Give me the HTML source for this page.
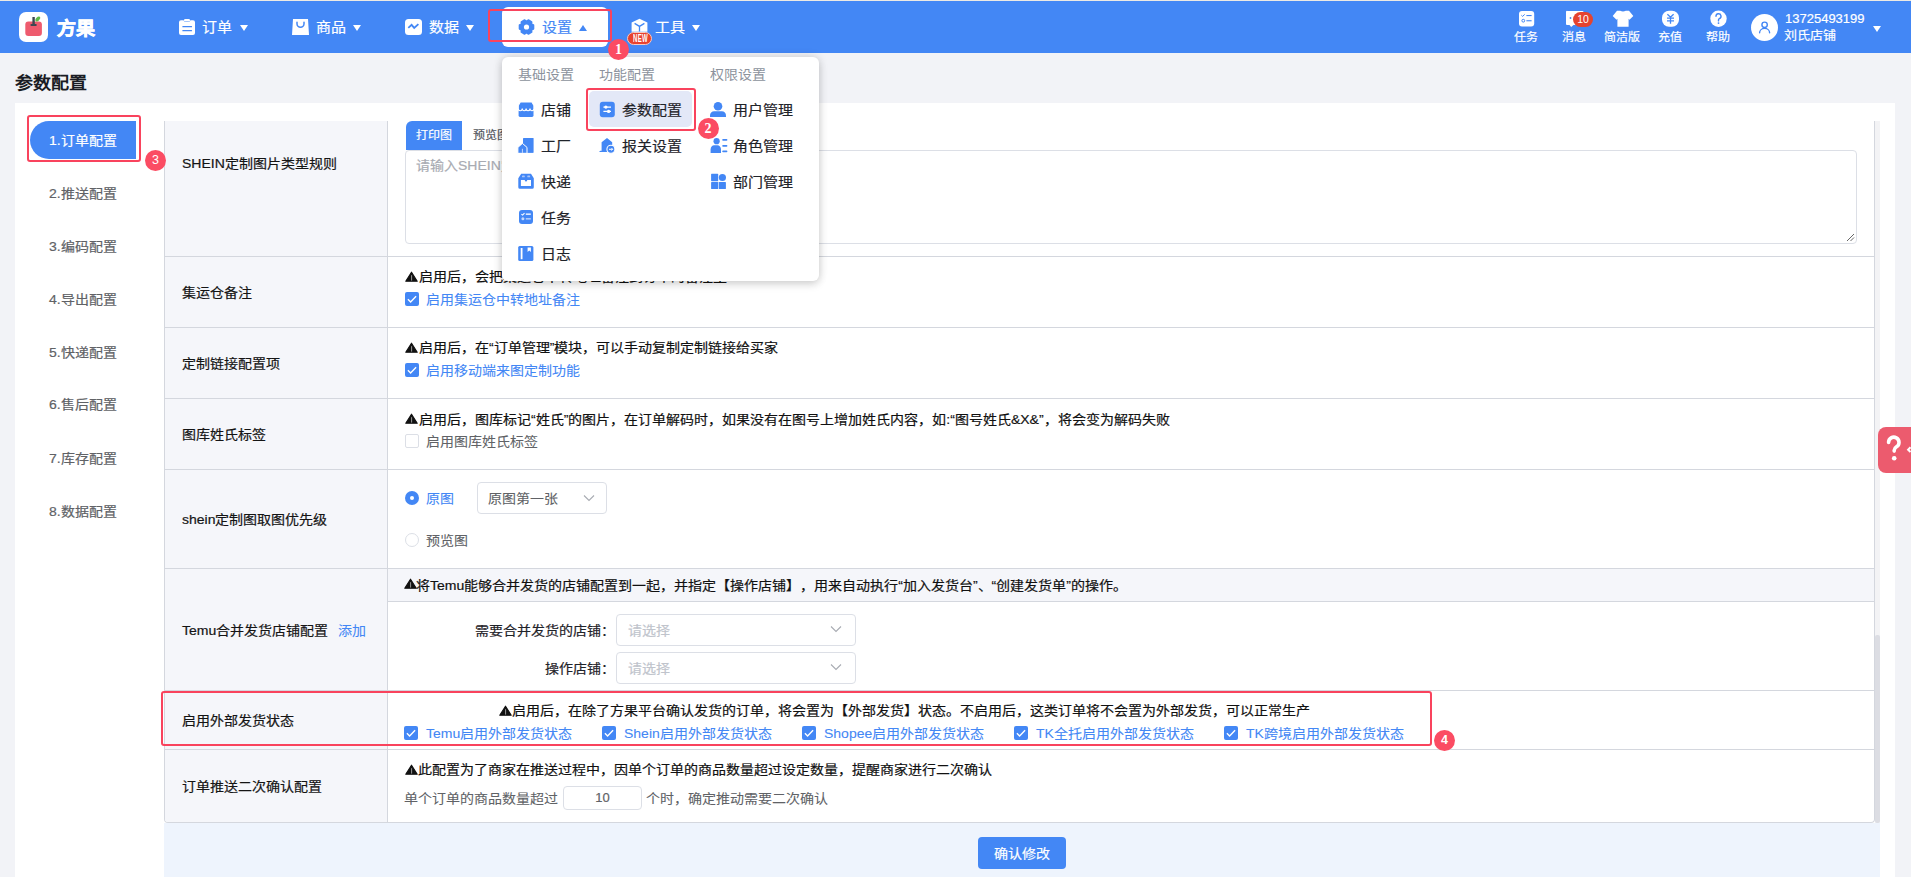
<!DOCTYPE html>
<html lang="zh-CN"><head><meta charset="utf-8">
<style>
*{box-sizing:border-box;margin:0;padding:0}
html,body{width:1911px;height:877px;overflow:hidden}
body{position:relative;text-spacing-trim:space-all;background:#f2f3f7;font-family:"Liberation Sans",sans-serif;font-size:14px;line-height:20px;color:#1f2329}
.a{position:absolute;white-space:nowrap}
.t{position:absolute;white-space:nowrap;line-height:20px;-webkit-text-stroke:0.2px currentColor;transform:scaleY(.93);transform-origin:50% 50%}
#topline{left:0;top:0;width:1911px;height:1px;background:#eceae4}
#nav{left:0;top:1px;width:1911px;height:52px;background:#4387f5}
.nt{color:#fff;font-size:15px}
.caret{position:absolute;width:0;height:0;border-left:4.5px solid transparent;border-right:4.5px solid transparent;border-top:6px solid #fff}
.caretup{position:absolute;width:0;height:0;border-left:4.5px solid transparent;border-right:4.5px solid transparent;border-bottom:6px solid #4387f5}
.rt{color:#fff;font-size:12px}
.redbox{position:absolute;border:2px solid #f9435d;border-radius:3px}
.badge{position:absolute;width:21px;height:21px;border-radius:50%;background:#fb4c63;color:#fff;font-family:"Liberation Serif",serif;font-size:14px;line-height:21px;text-align:center;font-weight:bold}
.badge.sm{font-family:"Liberation Sans",sans-serif;font-size:12.5px;font-weight:normal}
.side{color:#606266;font-size:14px}
.hl{background:#d4d7de}
.lab{font-size:14px;color:#141414}
.warn{font-size:14px;color:#111}
.tri{position:absolute;width:0;height:0;border-left:6px solid transparent;border-right:6px solid transparent;border-bottom:10px solid #111}
.cb{position:absolute;width:14px;height:14px;border-radius:2px;background:#4387f5}
.cb svg{position:absolute;left:0;top:0}
.cbe{position:absolute;width:14px;height:14px;border-radius:2px;background:#fff;border:1px solid #dcdfe6}
.t.blue{color:#4387f5;-webkit-text-stroke:0.08px currentColor}
.t.gray{color:#606266;-webkit-text-stroke:0.08px currentColor}
.blue{color:#4387f5}
.gray{color:#606266}
svg{display:block}
.sel{position:absolute;border:1px solid #dcdfe6;border-radius:4px;background:#fff}
.dd{font-size:15px;color:#1f2329}
.ddh{font-size:14px;color:#8c929c;-webkit-text-stroke:0 !important}
</style></head><body>
<div class="a" id="topline"></div>
<div class="a" id="nav"></div>

<!-- logo -->
<div class="a" style="left:19px;top:12px;width:29px;height:30px;background:#fff;border-radius:7px"></div>
<svg class="a" style="left:19px;top:12px" width="29" height="30" viewBox="0 0 29 30">
<rect x="6.3" y="9.6" width="16.6" height="14.4" rx="3" fill="#ee5b6e"/>
<rect x="13.4" y="5" width="2.4" height="8" fill="#3d4852"/>
<rect x="11.4" y="12" width="6.4" height="2" rx="1" fill="#3d4852"/>
<ellipse cx="18.8" cy="7" rx="3" ry="1.7" transform="rotate(-48 18.8 7)" fill="#5cb94a"/>
</svg>
<div class="t" style="left:56.5px;top:17px;font-size:19px;line-height:24px;font-weight:bold;color:#fff;-webkit-text-stroke:0.7px #fff">方果</div>

<!-- 订单 -->
<svg class="a" style="left:178px;top:18px" width="18" height="18" viewBox="0 0 18 18">
<path d="M3 2.2h2.6a2.2 2 0 0 0 2.2 1.8h2.4a2.2 2 0 0 0 2.2-1.8H15a2 2 0 0 1 2 2V15a2 2 0 0 1-2 2H3a2 2 0 0 1-2-2V4.2a2 2 0 0 1 2-2z" fill="#fff"/>
<rect x="6" y="1" width="6" height="2.6" rx="1.3" fill="#fff"/>
<rect x="4.3" y="8" width="9.8" height="1.3" rx=".6" fill="#4387f5"/>
<rect x="4.3" y="12" width="9.8" height="1.3" rx=".6" fill="#4387f5"/>
</svg>
<div class="t nt" style="left:202px;top:17px">订单</div>
<div class="caret" style="left:240px;top:25px"></div>

<!-- 商品 -->
<svg class="a" style="left:291px;top:18px" width="19" height="18" viewBox="0 0 19 18">
<path d="M2 1h15l1 16H1z" fill="#fff"/>
<path d="M6 4.2v1.6a3.5 3.5 0 0 0 7 0V4.2" fill="none" stroke="#4387f5" stroke-width="1.5" stroke-linecap="round"/>
</svg>
<div class="t nt" style="left:316px;top:17px">商品</div>
<div class="caret" style="left:353px;top:25px"></div>

<!-- 数据 -->
<svg class="a" style="left:404px;top:18px" width="19" height="18" viewBox="0 0 19 18">
<rect x="1" y="1" width="17" height="16" rx="3.5" fill="#fff"/>
<path d="M4.3 9.8L7.6 6.8L10.2 9.9L14.4 6.1" fill="none" stroke="#4387f5" stroke-width="1.8" stroke-linejoin="miter"/>
</svg>
<div class="t nt" style="left:429px;top:17px">数据</div>
<div class="caret" style="left:466px;top:25px"></div>

<!-- 设置 active -->
<div class="a" style="left:502px;top:7px;width:106px;height:40px;background:#fff;border-radius:6px"></div>
<svg class="a" style="left:517px;top:18px" width="19" height="18" viewBox="0 0 19 18">
<polygon points="14.71,6.46 16.36,7.16 16.36,10.84 14.71,11.54 14.31,12.24 14.52,14.02 11.34,15.86 9.90,14.79 9.10,14.79 7.66,15.86 4.48,14.02 4.69,12.24 4.29,11.54 2.64,10.84 2.64,7.16 4.29,6.46 4.69,5.76 4.48,3.98 7.66,2.14 9.10,3.21 9.90,3.21 11.34,2.14 14.52,3.98 14.31,5.76" fill="#4387f5" stroke="#4387f5" stroke-width="1.9" stroke-linejoin="round"/>
<circle cx="9.5" cy="9" r="2.6" fill="#fff"/>
</svg>
<div class="t nt" style="left:542px;top:17px;color:#4387f5">设置</div>
<div class="caretup" style="left:578.5px;top:24.5px"></div>

<!-- 工具 -->
<svg class="a" style="left:631px;top:18px" width="17" height="15" viewBox="0 0 17 15">
<path d="M8.5 .8L16.4 4.6V13.8H.6V4.6z" fill="#fff"/>
<path d="M3.6 5.4L8.5 8.4L13.4 5.4M8.5 8.4V13.6" fill="none" stroke="#4387f5" stroke-width="1.3"/>
</svg>
<div class="a" style="left:627px;top:32px;width:25px;height:13px;border-radius:6.5px;background:#e8422f;border:1px solid #f5c9c0"></div>
<div class="a" style="left:633px;top:33.5px;font-size:10px;line-height:10px;font-weight:bold;color:#fff;transform:scaleX(.6);transform-origin:0 0;letter-spacing:.5px">NEW</div>
<div class="t nt" style="left:655px;top:17px">工具</div>
<div class="caret" style="left:692px;top:25px"></div>

<!-- right side -->
<svg class="a" style="left:1518px;top:10px" width="17" height="17" viewBox="0 0 17 17">
<rect x="1" y="1" width="15.2" height="15.5" rx="3" fill="#fff"/>
<path d="M3.4 5.3l1.2 1.1 2.1-2" fill="none" stroke="#4387f5" stroke-width="1"/>
<rect x="8.4" y="5" width="5.2" height="1.1" fill="#4387f5"/>
<circle cx="5.3" cy="10.7" r="1.4" fill="none" stroke="#4387f5" stroke-width="1"/>
<rect x="8.4" y="10.2" width="5.2" height="1.1" fill="#4387f5"/>
</svg>
<div class="t rt" style="left:1514px;top:27px">任务</div>

<svg class="a" style="left:1565px;top:10px" width="20" height="18" viewBox="0 0 20 18">
<path d="M2.5 1h15a1 1 0 0 1 1 1v12a1 1 0 0 1-1 1H8.5L6.2 17 4.5 15H2a1 1 0 0 1-1-1V2a1 1 0 0 1 1.5-1z" fill="#fff"/>
<circle cx="5.5" cy="8" r=".9" fill="#4387f5"/>
</svg>
<div class="a" style="left:1573px;top:12px;width:20px;height:14.5px;border-radius:7.5px;background:#e5432f;color:#fff;font-size:10.5px;line-height:14.5px;text-align:center">10</div>
<div class="t rt" style="left:1562px;top:27px">消息</div>

<svg class="a" style="left:1612px;top:10px" width="22" height="18" viewBox="0 0 22 18">
<path d="M5 .8h3.2q2.8 1.3 5.6 0H17l4.3 5.3-3.8 3.6-.9-.9V16.7H5.4V8.8l-.9.9L.7 6.1z" fill="#fff"/>
</svg>
<div class="t rt" style="left:1604px;top:27px">简洁版</div>

<svg class="a" style="left:1661px;top:10px" width="19" height="18" viewBox="0 0 19 18">
<rect x="1" y=".8" width="17" height="16" rx="7" fill="#fff"/>
<path d="M6.4 4.2l3.1 3 3.1-3M6 8.1h7M6 10.9h7M9.5 7.2v6.6" fill="none" stroke="#4387f5" stroke-width="1.3"/>
</svg>
<div class="t rt" style="left:1658px;top:27px">充值</div>

<svg class="a" style="left:1709px;top:10px" width="19" height="18" viewBox="0 0 19 18">
<circle cx="9.5" cy="8.8" r="8.2" fill="#fff"/>
<path d="M7 6.3a2.5 2.5 0 1 1 3.4 2.3c-.6.3-.9.7-.9 1.3v1" fill="none" stroke="#4387f5" stroke-width="1.4" stroke-linecap="round"/>
<circle cx="9.5" cy="13.1" r=".9" fill="#4387f5"/>
</svg>
<div class="t rt" style="left:1706px;top:27px">帮助</div>

<div class="a" style="left:1751px;top:14px;width:27px;height:27px;border-radius:50%;background:#fff"></div>
<svg class="a" style="left:1751px;top:14px" width="27" height="27" viewBox="0 0 27 27">
<circle cx="13.6" cy="10.8" r="2.7" fill="none" stroke="#4387f5" stroke-width="1.4"/>
<path d="M8.6 18.7a5 4.3 0 0 1 10 0" fill="none" stroke="#4387f5" stroke-width="1.4" stroke-linecap="round"/>
</svg>
<div class="t" style="left:1785px;top:9px;font-size:13px;color:#fff">13725493199</div>
<div class="t" style="left:1784px;top:26px;font-size:13px;color:#fff">刘氏店铺</div>
<div class="caret" style="left:1873px;top:26px"></div>


<!-- page title -->
<div class="t" style="left:15px;top:72.5px;font-size:18px;font-weight:bold;color:#1a1c24;-webkit-text-stroke:0">参数配置</div>
<!-- card -->
<div class="a" style="left:15px;top:103px;width:1880px;height:774px;background:#fff"></div>
<!-- sidebar -->
<div class="a" style="left:30px;top:121px;width:106px;height:38px;background:#4387f5;border-radius:19px 0 0 19px"></div>
<div class="t" style="left:49px;top:130px;color:#fff">1.订单配置</div>
<div class="t side" style="left:49px;top:182.7px">2.推送配置</div>
<div class="t side" style="left:49px;top:236px">3.编码配置</div>
<div class="t side" style="left:49px;top:288.7px">4.导出配置</div>
<div class="t side" style="left:49px;top:341.5px">5.快递配置</div>
<div class="t side" style="left:49px;top:394.2px">6.售后配置</div>
<div class="t side" style="left:49px;top:447.5px">7.库存配置</div>
<div class="t side" style="left:49px;top:500.5px">8.数据配置</div>

<!-- table -->
<div class="a" style="left:164px;top:121px;width:1711px;height:702px;border:1px solid #d4d7de;border-top:none;border-radius:0 0 4px 4px;background:#fff"></div>
<div class="a" style="left:165px;top:121px;width:222px;height:701px;background:#f5f6fa;border-radius:0 0 0 3px"></div>
<div class="a hl" style="left:387px;top:121px;width:1px;height:701px"></div>
<div class="a" style="left:388px;top:569px;width:1486px;height:32px;background:#f5f6fa"></div>
<div class="a hl" style="left:165px;top:256px;width:1709px;height:1px"></div>
<div class="a hl" style="left:165px;top:327px;width:1709px;height:1px"></div>
<div class="a hl" style="left:165px;top:398px;width:1709px;height:1px"></div>
<div class="a hl" style="left:165px;top:469px;width:1709px;height:1px"></div>
<div class="a hl" style="left:165px;top:568px;width:1709px;height:1px"></div>
<div class="a hl" style="left:388px;top:601px;width:1486px;height:1px"></div>
<div class="a hl" style="left:165px;top:690px;width:1709px;height:1px"></div>
<div class="a hl" style="left:165px;top:749px;width:1709px;height:1px"></div>
<!-- scrollbar -->
<div class="a" style="left:1875px;top:121px;width:5px;height:702px;background:#f3f3f5"></div>
<div class="a" style="left:1875px;top:635px;width:5px;height:188px;background:#dcdde3;border-radius:2px"></div>
<!-- footer -->
<div class="a" style="left:164px;top:823px;width:1716px;height:54px;background:#eef4fd"></div>
<div class="a" style="left:978px;top:837px;width:88px;height:32px;background:#4387f5;border-radius:4px"></div>
<div class="t" style="left:994px;top:843px;color:#fff">确认修改</div>

<!-- labels -->
<div class="t lab" style="left:182px;top:153px">SHEIN定制图片类型规则</div>
<div class="t lab" style="left:182px;top:282px">集运仓备注</div>
<div class="t lab" style="left:182px;top:353px">定制链接配置项</div>
<div class="t lab" style="left:182px;top:424px">图库姓氏标签</div>
<div class="t lab" style="left:182px;top:509px">shein定制图取图优先级</div>
<div class="t lab" style="left:182px;top:620px">Temu合并发货店铺配置</div>
<div class="t blue" style="left:338px;top:620px">添加</div>
<div class="t lab" style="left:182px;top:710px">启用外部发货状态</div>
<div class="t lab" style="left:182px;top:776px">订单推送二次确认配置</div>


<!-- row1 -->
<div class="a" style="left:406px;top:121px;width:56px;height:29px;background:#4387f5;border-radius:6px 0 0 0"></div>
<div class="t" style="left:416px;top:125px;font-size:12px;color:#fff">打印图</div>
<div class="t" style="left:473px;top:125px;font-size:12px;color:#51555c">预览图</div>
<div class="a" style="left:405px;top:150px;width:1452px;height:94px;border:1px solid #dcdfe6;border-radius:4px;background:#fff"></div>
<svg class="a" style="left:1845px;top:232px" width="10" height="10" viewBox="0 0 10 10"><path d="M2 9L9 2M5.5 9L9 5.5" stroke="#555" stroke-width=".9"/></svg>
<div class="t" style="left:416px;top:155px;font-size:14px;color:#a8abb2">请输入SHEIN定制图片类型规则</div>

<!-- row2 -->
<svg class="a" style="left:405px;top:271px" width="13" height="11" viewBox="0 0 13 11"><path d="M6.5 1.2L12.2 10.2H.8z" fill="#111" stroke="#111" stroke-width="1.2" stroke-linejoin="round"/><rect x="6" y="4.2" width="1.1" height="5.4" fill="#8a8a8a"/></svg>
<div class="t warn" style="left:419px;top:266px">启用后，会把集运仓中转地址备注到订单的备注里</div>
<div class="cb" style="left:405px;top:292px"><svg width="14" height="14" viewBox="0 0 14 14"><path d="M2.9 7.3L5.6 10L11.1 4.3" fill="none" stroke="#fff" stroke-width="1.4"/></svg></div>
<div class="t blue" style="left:426px;top:289px">启用集运仓中转地址备注</div>

<!-- row3 -->
<svg class="a" style="left:405px;top:342px" width="13" height="11" viewBox="0 0 13 11"><path d="M6.5 1.2L12.2 10.2H.8z" fill="#111" stroke="#111" stroke-width="1.2" stroke-linejoin="round"/><rect x="6" y="4.2" width="1.1" height="5.4" fill="#8a8a8a"/></svg>
<div class="t warn" style="left:419px;top:337px">启用后，在“订单管理”模块，可以手动复制定制链接给买家</div>
<div class="cb" style="left:405px;top:363px"><svg width="14" height="14" viewBox="0 0 14 14"><path d="M2.9 7.3L5.6 10L11.1 4.3" fill="none" stroke="#fff" stroke-width="1.4"/></svg></div>
<div class="t blue" style="left:426px;top:360px">启用移动端来图定制功能</div>

<!-- row4 -->
<svg class="a" style="left:405px;top:413px" width="13" height="11" viewBox="0 0 13 11"><path d="M6.5 1.2L12.2 10.2H.8z" fill="#111" stroke="#111" stroke-width="1.2" stroke-linejoin="round"/><rect x="6" y="4.2" width="1.1" height="5.4" fill="#8a8a8a"/></svg>
<div class="t warn" style="left:419px;top:409px">启用后，图库标记“姓氏”的图片，在订单解码时，如果没有在图号上增加姓氏内容，如:“图号姓氏&amp;X&amp;”，将会变为解码失败</div>
<div class="cbe" style="left:405px;top:434px"></div>
<div class="t gray" style="left:426px;top:431px">启用图库姓氏标签</div>

<!-- row5 -->
<div class="a" style="left:405px;top:491px;width:14px;height:14px;border-radius:50%;background:#4387f5"></div>
<div class="a" style="left:410px;top:496px;width:4px;height:4px;border-radius:50%;background:#fff"></div>
<div class="t blue" style="left:426px;top:488px">原图</div>
<div class="sel" style="left:477px;top:482px;width:130px;height:32px"></div>
<div class="t gray" style="left:488px;top:488px">原图第一张</div>
<div class="a" style="left:583px;top:494px"><svg width="12" height="8" viewBox="0 0 12 8"><path d="M1 1.5l5 5 5-5" fill="none" stroke="#a8abb2" stroke-width="1.1"/></svg></div>
<div class="a" style="left:405px;top:533px;width:14px;height:14px;border-radius:50%;background:#fff;border:1px solid #dcdfe6"></div>
<div class="t gray" style="left:426px;top:530px">预览图</div>

<!-- row6 -->
<svg class="a" style="left:404px;top:578px" width="13" height="11" viewBox="0 0 13 11"><path d="M6.5 1.2L12.2 10.2H.8z" fill="#111" stroke="#111" stroke-width="1.2" stroke-linejoin="round"/><rect x="6" y="4.2" width="1.1" height="5.4" fill="#8a8a8a"/></svg>
<div class="t warn" style="left:416px;top:575px">将Temu能够合并发货的店铺配置到一起，并指定【操作店铺】，用来自动执行“加入发货台”、“创建发货单”的操作。</div>
<div class="t" style="left:475px;top:620px;color:#1f2329">需要合并发货的店铺：</div>
<div class="sel" style="left:616px;top:614px;width:240px;height:32px"></div>
<div class="t" style="left:628px;top:620px;color:#c0c4cc">请选择</div>
<div class="a" style="left:830px;top:625px"><svg width="12" height="8" viewBox="0 0 12 8"><path d="M1 1.5l5 5 5-5" fill="none" stroke="#a8abb2" stroke-width="1.1"/></svg></div>
<div class="t" style="left:545px;top:658px;color:#1f2329">操作店铺：</div>
<div class="sel" style="left:616px;top:652px;width:240px;height:32px"></div>
<div class="t" style="left:628px;top:658px;color:#c0c4cc">请选择</div>
<div class="a" style="left:830px;top:663px"><svg width="12" height="8" viewBox="0 0 12 8"><path d="M1 1.5l5 5 5-5" fill="none" stroke="#a8abb2" stroke-width="1.1"/></svg></div>

<!-- row7 -->
<svg class="a" style="left:499px;top:705px" width="13" height="11" viewBox="0 0 13 11"><path d="M6.5 1.2L12.2 10.2H.8z" fill="#111" stroke="#111" stroke-width="1.2" stroke-linejoin="round"/><rect x="6" y="4.2" width="1.1" height="5.4" fill="#8a8a8a"/></svg>
<div class="t warn" style="left:512px;top:700px">启用后，在除了方果平台确认发货的订单，将会置为【外部发货】状态。不启用后，这类订单将不会置为外部发货，可以正常生产</div>
<div class="cb" style="left:404px;top:726px"><svg width="14" height="14" viewBox="0 0 14 14"><path d="M2.9 7.3L5.6 10L11.1 4.3" fill="none" stroke="#fff" stroke-width="1.4"/></svg></div>
<div class="t blue" style="left:426px;top:723px">Temu启用外部发货状态</div>
<div class="cb" style="left:602px;top:726px"><svg width="14" height="14" viewBox="0 0 14 14"><path d="M2.9 7.3L5.6 10L11.1 4.3" fill="none" stroke="#fff" stroke-width="1.4"/></svg></div>
<div class="t blue" style="left:624px;top:723px">Shein启用外部发货状态</div>
<div class="cb" style="left:802px;top:726px"><svg width="14" height="14" viewBox="0 0 14 14"><path d="M2.9 7.3L5.6 10L11.1 4.3" fill="none" stroke="#fff" stroke-width="1.4"/></svg></div>
<div class="t blue" style="left:824px;top:723px">Shopee启用外部发货状态</div>
<div class="cb" style="left:1014px;top:726px"><svg width="14" height="14" viewBox="0 0 14 14"><path d="M2.9 7.3L5.6 10L11.1 4.3" fill="none" stroke="#fff" stroke-width="1.4"/></svg></div>
<div class="t blue" style="left:1036px;top:723px">TK全托启用外部发货状态</div>
<div class="cb" style="left:1224px;top:726px"><svg width="14" height="14" viewBox="0 0 14 14"><path d="M2.9 7.3L5.6 10L11.1 4.3" fill="none" stroke="#fff" stroke-width="1.4"/></svg></div>
<div class="t blue" style="left:1246px;top:723px">TK跨境启用外部发货状态</div>

<!-- row8 -->
<svg class="a" style="left:405px;top:764px" width="13" height="11" viewBox="0 0 13 11"><path d="M6.5 1.2L12.2 10.2H.8z" fill="#111" stroke="#111" stroke-width="1.2" stroke-linejoin="round"/><rect x="6" y="4.2" width="1.1" height="5.4" fill="#8a8a8a"/></svg>
<div class="t warn" style="left:418px;top:759px">此配置为了商家在推送过程中，因单个订单的商品数量超过设定数量，提醒商家进行二次确认</div>
<div class="t gray" style="left:404px;top:788px">单个订单的商品数量超过</div>
<div class="sel" style="left:563px;top:786px;width:79px;height:24px"></div>
<div class="t" style="left:563px;top:788px;width:79px;text-align:center;font-size:13px;color:#606266">10</div>
<div class="t gray" style="left:646px;top:788px">个时，确定推动需要二次确认</div>


<!-- dropdown -->
<div class="a" style="left:502px;top:57px;width:317px;height:224px;background:#fff;border-radius:6px;box-shadow:0 0 10px rgba(0,0,0,.16),0 4px 9px rgba(0,0,0,.10)"></div>
<div class="t ddh" style="left:518px;top:64px">基础设置</div>
<div class="t ddh" style="left:599px;top:64px">功能配置</div>
<div class="t ddh" style="left:710px;top:64px">权限设置</div>
<div class="a" style="left:589px;top:91px;width:103px;height:36px;background:#e3e8f7;border-radius:5px"></div>
<svg class="a" style="left:517px;top:101px" width="17" height="17" viewBox="0 0 17 17"><rect x="1.6" y="8.6" width="14.9" height="7.3" rx="1.4" fill="#4387f5"/><path d="M3.3 1H14.9L16.9 4.5V7.8A1.95 1.95 0 0 1 13 7.8A1.95 1.95 0 0 1 9.1 7.8A1.95 1.95 0 0 1 5.2 7.8A1.95 1.95 0 0 1 1.3 7.8V4.5z" fill="#4387f5" stroke="#fff" stroke-width="1.1" stroke-linejoin="round"/></svg><div class="t dd" style="left:541px;top:100px">店铺</div>
<svg class="a" style="left:517px;top:137px" width="17" height="17" viewBox="0 0 17 17"><rect x="6" y="1" width="10.6" height="14.9" rx=".6" fill="#4387f5"/><path d="M.9 10.4L5.4 6.4L10 10.4V16.4H.9z" fill="#4387f5" stroke="#fff" stroke-width="1"/><rect x="4.9" y="11.8" width="1.1" height="4.1" fill="#b8cffb"/><rect x=".4" y="15.9" width="17" height="1.1" fill="#fff"/></svg><div class="t dd" style="left:541px;top:136px">工厂</div>
<svg class="a" style="left:517px;top:173px" width="17" height="17" viewBox="0 0 17 17"><path d="M4.2 .8H14l2.8 4.4v9.1a1.5 1.5 0 0 1-1.5 1.5H2.8a1.5 1.5 0 0 1-1.5-1.5V5.2z" fill="#4387f5"/><path d="M3.9 6.9H7.8v.4a1.2 1.2 0 0 0 2.4 0v-.4H14V13H3.9z" fill="#fff"/><rect x="5" y="2.5" width="2.8" height="1.8" rx=".6" fill="#a9c5f9"/><rect x="10.3" y="2.5" width="2.8" height="1.8" rx=".6" fill="#a9c5f9"/></svg><div class="t dd" style="left:541px;top:172px">快递</div>
<svg class="a" style="left:517px;top:209px" width="17" height="17" viewBox="0 0 17 17"><rect x="2" y="1" width="14" height="14" rx="3" fill="#4387f5"/><path d="M4.4 5.1l1.2 1 1.9-2" fill="none" stroke="#fff" stroke-width="1.1"/><rect x="8.8" y="4.5" width="5" height="1.3" fill="#fff"/><circle cx="5.9" cy="9.8" r="1.5" fill="#c5d9fc"/><rect x="8.8" y="9.2" width="5" height="1.3" fill="#c5d9fc"/></svg><div class="t dd" style="left:541px;top:208px">任务</div>
<svg class="a" style="left:517px;top:245px" width="17" height="17" viewBox="0 0 17 17"><rect x="1.2" y="1" width="15.2" height="15" rx="1.5" fill="#4387f5"/><rect x="3.7" y="3" width="1.8" height="11.2" fill="#fff"/><path d="M10.6 2.5h3.3v4.5L12.25 5.6 10.6 7z" fill="#fff"/></svg><div class="t dd" style="left:541px;top:244px">日志</div>
<svg class="a" style="left:599px;top:101px" width="17" height="17" viewBox="0 0 17 17"><rect x=".8" y=".8" width="15" height="15.4" rx="3" fill="#4387f5"/><path d="M4.4 6.1h7.6M4.4 10.4h7.6" stroke="#fff" stroke-width="1.2"/><circle cx="6.9" cy="6.1" r="1.6" fill="#fff"/><circle cx="9.6" cy="10.4" r="1.6" fill="#fff"/></svg><div class="t dd" style="left:621.5px;top:100px">参数配置</div>
<svg class="a" style="left:599px;top:137px" width="17" height="17" viewBox="0 0 17 17"><path d="M8 1.1L13.2 5.2V9.2A4.6 4.6 0 0 0 8.6 15H.3C.3 14.2 1 13.7 2.6 13.7V5.2z" fill="#4387f5"/><circle cx="11.9" cy="12.3" r="4" fill="#4387f5" stroke="#fff" stroke-width="1.1"/><path d="M10 12.3h3.6M12.5 11.1l1.2 1.2-1.2 1.2" fill="none" stroke="#fff" stroke-width="1"/></svg><div class="t dd" style="left:621.5px;top:136px">报关设置</div>
<svg class="a" style="left:709px;top:101px" width="17" height="17" viewBox="0 0 17 17"><circle cx="9" cy="5.3" r="4.3" fill="#4387f5"/><path d="M1 15.9v-1.4c0-2.3 1.8-4.2 4.1-4.2h7.8c2.3 0 4.1 1.9 4.1 4.2v1.4z" fill="#4387f5"/></svg><div class="t dd" style="left:733px;top:100px">用户管理</div>
<svg class="a" style="left:709px;top:137px" width="20" height="17" viewBox="0 0 20 17"><circle cx="7.6" cy="4.2" r="3.1" fill="#4387f5"/><path d="M1.6 16v-3.6c0-2.3 1.6-4.1 3.6-4.1h3.2c2 0 3.6 1.8 3.6 4.1V16z" fill="#4387f5"/><rect x="13.2" y="2" width="5.2" height="1.7" rx=".85" fill="#4387f5"/><rect x="13.2" y="8" width="5.2" height="1.7" rx=".85" fill="#4387f5"/><rect x="13.2" y="13.5" width="5.2" height="1.7" rx=".85" fill="#4387f5"/></svg><div class="t dd" style="left:733px;top:136px">角色管理</div>
<svg class="a" style="left:709px;top:173px" width="17" height="17" viewBox="0 0 17 17"><rect x="2.1" y=".8" width="7.1" height="7.4" rx=".6" fill="#4387f5"/><circle cx="13.4" cy="4.5" r="3.6" fill="#4387f5"/><rect x="2.1" y="9" width="7.1" height="7.1" rx=".6" fill="#4387f5"/><rect x="9.8" y="9" width="7.1" height="7.1" rx=".6" fill="#4387f5"/></svg><div class="t dd" style="left:733px;top:172px">部门管理</div>

<!-- annotations -->
<div class="redbox" style="left:488px;top:8.5px;width:124px;height:33.5px"></div>
<div class="badge" style="left:608px;top:39.2px">1</div>
<div class="redbox" style="left:585.5px;top:87.5px;width:110px;height:43px"></div>
<div class="badge" style="left:697.5px;top:118px">2</div>
<div class="redbox" style="left:26.5px;top:114.5px;width:114px;height:47px"></div>
<div class="badge sm" style="left:145px;top:150.2px">3</div>
<div class="redbox" style="left:160.5px;top:691px;width:1271px;height:55px"></div>
<div class="badge sm" style="left:1434px;top:729.5px;font-weight:bold">4</div>

<!-- help float -->
<div class="a" style="left:1878px;top:427px;width:33px;height:46px;border-radius:8px 0 0 8px;background:#ec5b6e"></div>
<svg class="a" style="left:1885px;top:435px" width="26" height="30" viewBox="0 0 26 30">
<path d="M3.6 7.4a5.2 5.2 0 1 1 7.9 4.4c-1.4.9-2.3 1.7-2.3 3.4v.9" fill="none" stroke="#fff" stroke-width="3.6" stroke-linecap="round"/><circle cx="9.2" cy="23.2" r="2.3" fill="#fff"/><path d="M25.5 12.3l-2.4 2.4 2.4 2.4" fill="none" stroke="#fff" stroke-width="2"/></svg>

</body></html>
